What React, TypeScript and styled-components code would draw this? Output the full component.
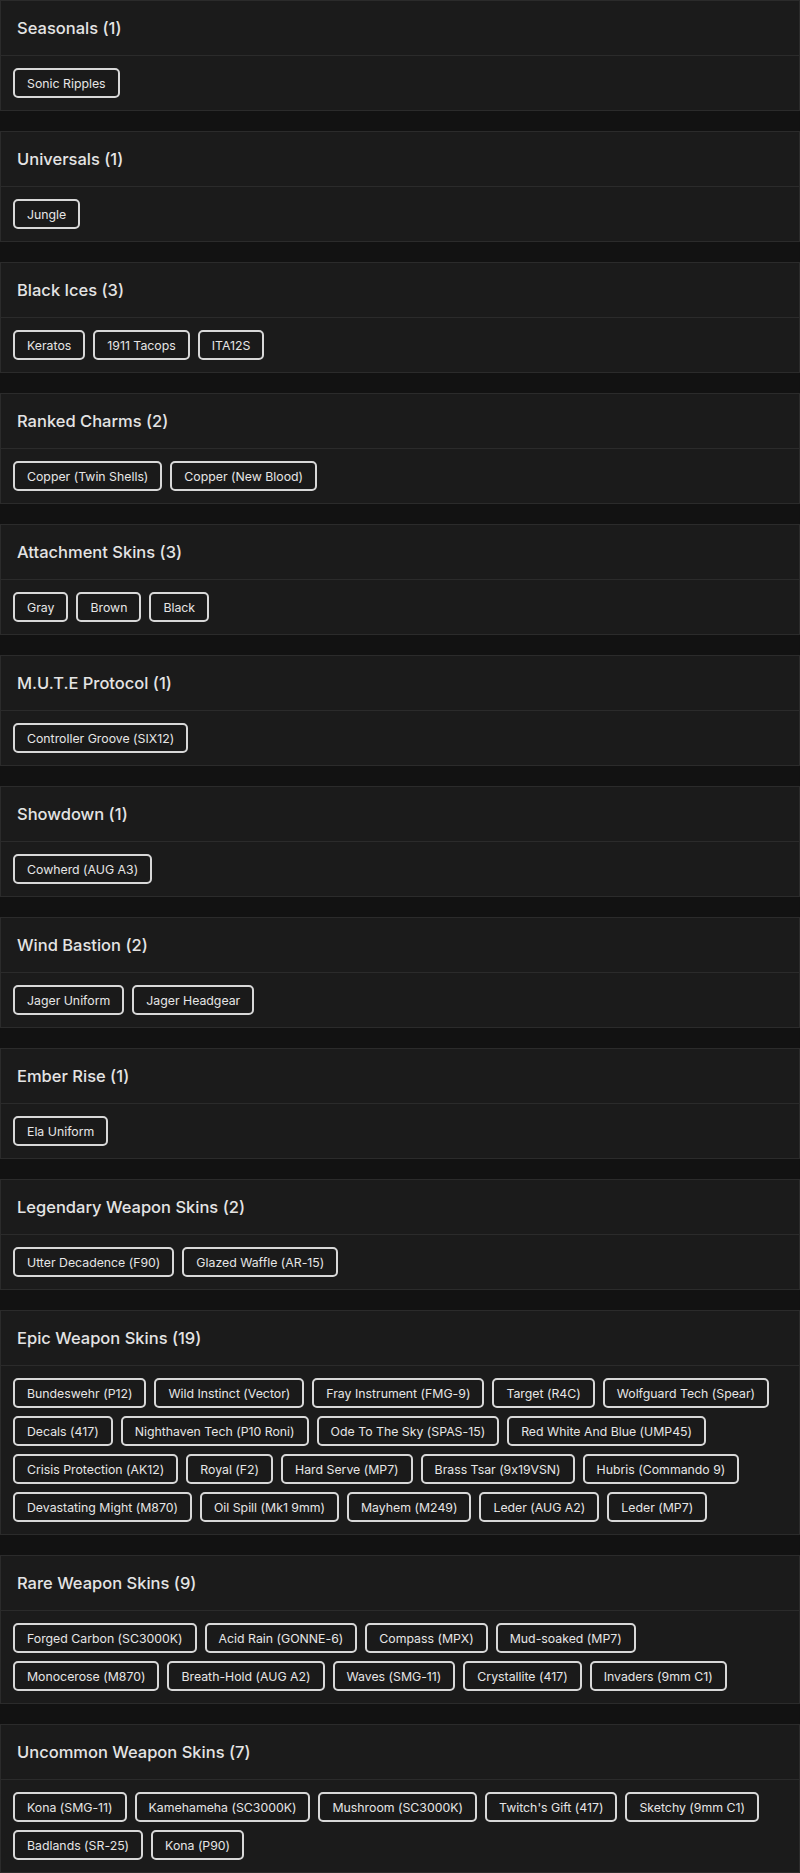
import * as React from "react"
import styled, { createGlobalStyle } from "styled-components"

const GlobalStyle = createGlobalStyle`
  body {
    margin: 0;
    background: #121212;
    font-family: Inter, "Noto Sans", sans-serif;
    font-feature-settings: "calt" 0;
  }
`

const Page = styled.div`
  display: flex;
  flex-direction: column;
  gap: 20px;
`

const Card = styled.section`
  background: #1b1b1b;
  border: 1px solid #2b2b2b;
`

const CardHeader = styled.h2`
  margin: 0;
  padding: 16px 16px;
  line-height: 22px;
  font-size: 16.5px;
  font-weight: 500;
  color: #e4e4e4;
  border-bottom: 1px solid #2b2b2b;
`

const ItemList = styled.div`
  display: flex;
  flex-wrap: wrap;
  padding: 8px;
`

const ItemButton = styled.button`
  margin: 4px;
  height: 30px;
  padding: 0 12px;
  background: #1a1a1a;
  border: 2px solid #d8d8d8;
  border-radius: 5px;
  color: #e6e6e6;
  font-family: inherit;
  font-feature-settings: "calt" 0;
  font-size: 12.3px;
  white-space: nowrap;
`

interface Group {
  title: string
  items: string[]
}

const groups: Group[] = [
  { title: "Seasonals", items: ["Sonic Ripples"] },
  { title: "Universals", items: ["Jungle"] },
  { title: "Black Ices", items: ["Keratos", "1911 Tacops", "ITA12S"] },
  { title: "Ranked Charms", items: ["Copper (Twin Shells)", "Copper (New Blood)"] },
  { title: "Attachment Skins", items: ["Gray", "Brown", "Black"] },
  { title: "M.U.T.E Protocol", items: ["Controller Groove (SIX12)"] },
  { title: "Showdown", items: ["Cowherd (AUG A3)"] },
  { title: "Wind Bastion", items: ["Jager Uniform", "Jager Headgear"] },
  { title: "Ember Rise", items: ["Ela Uniform"] },
  { title: "Legendary Weapon Skins", items: ["Utter Decadence (F90)", "Glazed Waffle (AR-15)"] },
  {
    title: "Epic Weapon Skins",
    items: [
      "Bundeswehr (P12)",
      "Wild Instinct (Vector)",
      "Fray Instrument (FMG-9)",
      "Target (R4C)",
      "Wolfguard Tech (Spear)",
      "Decals (417)",
      "Nighthaven Tech (P10 Roni)",
      "Ode To The Sky (SPAS-15)",
      "Red White And Blue (UMP45)",
      "Crisis Protection (AK12)",
      "Royal (F2)",
      "Hard Serve (MP7)",
      "Brass Tsar (9x19VSN)",
      "Hubris (Commando 9)",
      "Devastating Might (M870)",
      "Oil Spill (Mk1 9mm)",
      "Mayhem (M249)",
      "Leder (AUG A2)",
      "Leder (MP7)",
    ],
  },
  {
    title: "Rare Weapon Skins",
    items: [
      "Forged Carbon (SC3000K)",
      "Acid Rain (GONNE-6)",
      "Compass (MPX)",
      "Mud-soaked (MP7)",
      "Monocerose (M870)",
      "Breath-Hold (AUG A2)",
      "Waves (SMG-11)",
      "Crystallite (417)",
      "Invaders (9mm C1)",
    ],
  },
  {
    title: "Uncommon Weapon Skins",
    items: [
      "Kona (SMG-11)",
      "Kamehameha (SC3000K)",
      "Mushroom (SC3000K)",
      "Twitch's Gift (417)",
      "Sketchy (9mm C1)",
      "Badlands (SR-25)",
      "Kona (P90)",
    ],
  },
]

const App: React.FC = () => {
  return (
    <>
      <GlobalStyle />
      <Page>
        {groups.map(group => (
          <Card key={group.title}>
            <CardHeader>
              {group.title} ({group.items.length})
            </CardHeader>
            <ItemList>
              {group.items.map((item, i) => (
                <ItemButton key={i}>{item}</ItemButton>
              ))}
            </ItemList>
          </Card>
        ))}
      </Page>
    </>
  )
}

export default App
